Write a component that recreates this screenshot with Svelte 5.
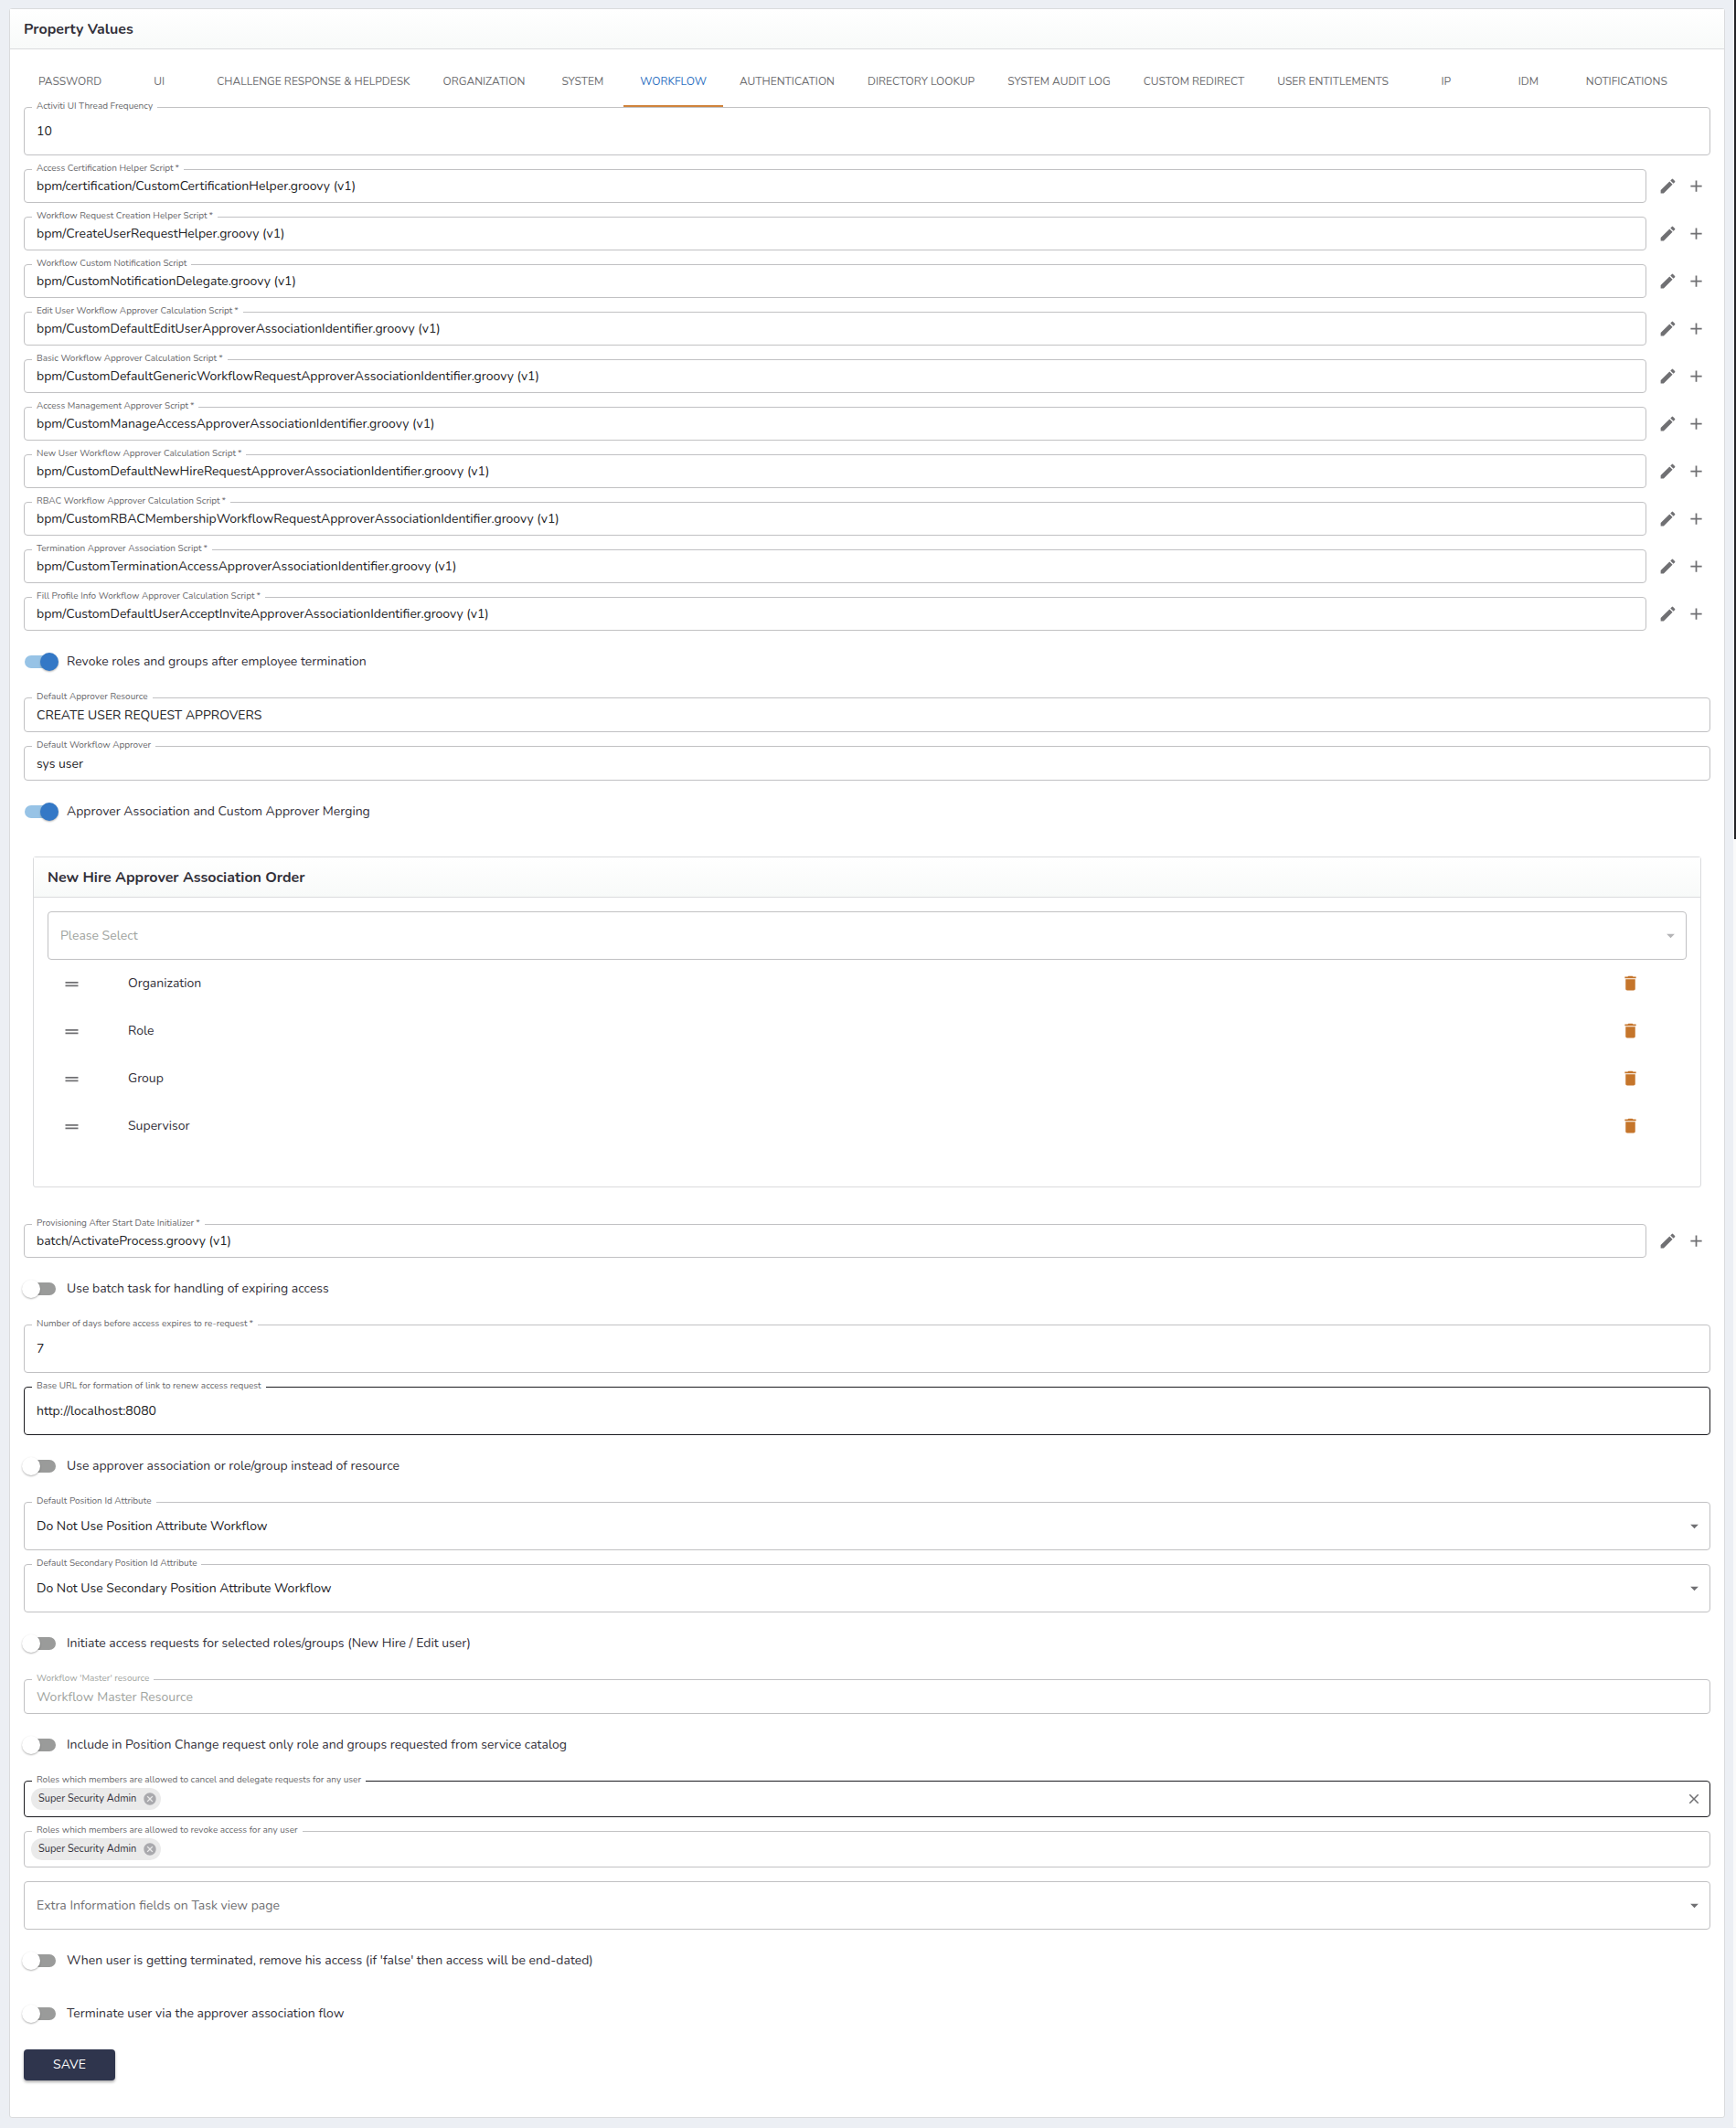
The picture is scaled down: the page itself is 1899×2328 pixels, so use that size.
<script>
  const tabs = [
    'Password', 'UI', 'Challenge Response & Helpdesk', 'Organization', 'System',
    'Workflow', 'Authentication', 'Directory Lookup', 'System Audit Log',
    'Custom Redirect', 'User Entitlements', 'IP', 'IDM', 'Notifications',
  ];
  let activeTab = $state('Workflow');

  const scripts = $state([
    { id: 'cert', label: 'Access Certification Helper Script', required: true, value: 'bpm/certification/CustomCertificationHelper.groovy (v1)' },
    { id: 'create', label: 'Workflow Request Creation Helper Script', required: true, value: 'bpm/CreateUserRequestHelper.groovy (v1)' },
    { id: 'notify', label: 'Workflow Custom Notification Script', value: 'bpm/CustomNotificationDelegate.groovy (v1)' },
    { id: 'edit', label: 'Edit User Workflow Approver Calculation Script', required: true, value: 'bpm/CustomDefaultEditUserApproverAssociationIdentifier.groovy (v1)' },
    { id: 'basic', label: 'Basic Workflow Approver Calculation Script', required: true, value: 'bpm/CustomDefaultGenericWorkflowRequestApproverAssociationIdentifier.groovy (v1)' },
    { id: 'access', label: 'Access Management Approver Script', required: true, value: 'bpm/CustomManageAccessApproverAssociationIdentifier.groovy (v1)' },
    { id: 'newuser', label: 'New User Workflow Approver Calculation Script', required: true, value: 'bpm/CustomDefaultNewHireRequestApproverAssociationIdentifier.groovy (v1)' },
    { id: 'rbac', label: 'RBAC Workflow Approver Calculation Script', required: true, value: 'bpm/CustomRBACMembershipWorkflowRequestApproverAssociationIdentifier.groovy (v1)' },
    { id: 'term', label: 'Termination Approver Association Script', required: true, value: 'bpm/CustomTerminationAccessApproverAssociationIdentifier.groovy (v1)' },
    { id: 'profile', label: 'Fill Profile Info Workflow Approver Calculation Script', required: true, value: 'bpm/CustomDefaultUserAcceptInviteApproverAssociationIdentifier.groovy (v1)' },
  ]);

  const provisioning = $state({
    id: 'provisioning',
    label: 'Provisioning After Start Date Initializer',
    required: true,
    value: 'batch/ActivateProcess.groovy (v1)',
  });

  let order = $state(['Organization', 'Role', 'Group', 'Supervisor']);

  function removeApprover(name) {
    order = order.filter(o => o !== name);
  }
</script>

{#snippet icon(d)}
  <svg class="icon" viewBox="0 0 24 24" aria-hidden="true"><path {d} /></svg>
{/snippet}

{#snippet fieldLabel(id, label, required = false)}
  <label for={id}>{label}{#if required}&thinsp;*{/if}</label>
{/snippet}

{#snippet textField(id, label, value, kind = '', required = false)}
  <div class="field {kind}">
    {@render fieldLabel(id, label, required)}
    <input {id} type="text" {value} />
  </div>
{/snippet}

{#snippet scriptField(s)}
  <div class="script-row">
    <div class="field short">
      {@render fieldLabel(s.id, s.label, s.required)}
      <input id={s.id} type="text" bind:value={s.value} />
    </div>
    <div class="actions">
      <button type="button" class="icon-btn" aria-label="Edit">
        {@render icon('M3 17.25V21h3.75L17.81 9.94l-3.75-3.75L3 17.25zM20.71 7.04c.39-.39.39-1.02 0-1.41l-2.34-2.34a.9959.9959 0 0 0-1.41 0l-1.83 1.83 3.75 3.75 1.83-1.83z')}
      </button>
      <button type="button" class="icon-btn" aria-label="Add">
        {@render icon('M19 13h-6v6h-2v-6H5v-2h6V5h2v6h6v2z')}
      </button>
    </div>
  </div>
{/snippet}

{#snippet toggle(label, checked = false)}
  <label class="toggle">
    <input type="checkbox" role="switch" {checked} />
    <span>{label}</span>
  </label>
{/snippet}

{#snippet dropdown(id, label, value)}
  <div class="field">
    {@render fieldLabel(id, label)}
    <select {id}><option>{value}</option></select>
    {@render icon('M7 10l5 5 5-5z')}
  </div>
{/snippet}

{#snippet chipField(id, label, active = false)}
  <div class="field chips" class:active>
    {@render fieldLabel(id, label)}
    <span class="chip">
      Super Security Admin
      <button type="button" aria-label="Remove Super Security Admin">
        {@render icon('M12 2C6.47 2 2 6.47 2 12s4.47 10 10 10 10-4.47 10-10S17.53 2 12 2zm5 13.59L15.59 17 12 13.41 8.41 17 7 15.59 10.59 12 7 8.41 8.41 7 12 10.59 15.59 7 17 8.41 13.41 12 17 15.59z')}
      </button>
    </span>
    <input {id} type="text" />
    {#if active}
      <button type="button" class="clear" aria-label="Clear">
        {@render icon('M19 6.41L17.59 5 12 10.59 6.41 5 5 6.41 10.59 12 5 17.59 6.41 19 12 13.41 17.59 19 19 17.59 13.41 12z')}
      </button>
    {/if}
  </div>
{/snippet}

<div class="page">
  <main class="card">
    <h1 class="card-title">Property Values</h1>
    <nav class="tabs" role="tablist">
      {#each tabs as tab}
        <button
          type="button" role="tab"
          aria-selected={tab === activeTab}
          class:selected={tab === activeTab}
          onclick={() => (activeTab = tab)}
        >{tab}</button>
      {/each}
    </nav>

    <form class="form" onsubmit={e => e.preventDefault()}>
      {@render textField('frequency', 'Activiti UI Thread Frequency', '10')}
      {#each scripts as s (s.id)}
        {@render scriptField(s)}
      {/each}

      {@render toggle('Revoke roles and groups after employee termination', true)}
      {@render textField('resource', 'Default Approver Resource', 'CREATE USER REQUEST APPROVERS', 'medium')}
      {@render textField('approver', 'Default Workflow Approver', 'sys user', 'medium')}
      {@render toggle('Approver Association and Custom Approver Merging', true)}

      <section class="card nested">
        <h2 class="card-title">New Hire Approver Association Order</h2>
        <div class="nested-body">
          <div class="field disabled">
            <select aria-label="Please Select" disabled><option>Please Select</option></select>
            {@render icon('M7 10l5 5 5-5z')}
          </div>
          <ul class="order">
            {#each order as name (name)}
              <li>
                <span class="handle">{@render icon('M20 9H4v2h16V9zM4 15h16v-2H4v2z')}</span>
                <span class="name">{name}</span>
                <button type="button" class="icon-btn trash" aria-label="Delete {name}" onclick={() => removeApprover(name)}>
                  {@render icon('M6 19c0 1.1.9 2 2 2h8c1.1 0 2-.9 2-2V7H6v12zM19 4h-3.5l-1-1h-5l-1 1H5v2h14V4z')}
                </button>
              </li>
            {/each}
          </ul>
        </div>
      </section>

      {@render scriptField(provisioning)}
      {@render toggle('Use batch task for handling of expiring access')}
      {@render textField('days', 'Number of days before access expires to re-request', '7', '', true)}
      {@render textField('base-url', 'Base URL for formation of link to renew access request', 'http://localhost:8080', 'active')}
      {@render toggle('Use approver association or role/group instead of resource')}
      {@render dropdown('position', 'Default Position Id Attribute', 'Do Not Use Position Attribute Workflow')}
      {@render dropdown('position2', 'Default Secondary Position Id Attribute', 'Do Not Use Secondary Position Attribute Workflow')}
      {@render toggle('Initiate access requests for selected roles/groups (New Hire / Edit user)')}
      <div class="field medium disabled">
        {@render fieldLabel('master', "Workflow 'Master' resource")}
        <input id="master" type="text" placeholder="Workflow Master Resource" disabled />
      </div>
      {@render toggle('Include in Position Change request only role and groups requested from service catalog')}
      {@render chipField('cancel-roles', 'Roles which members are allowed to cancel and delegate requests for any user', true)}
      {@render chipField('revoke-roles', 'Roles which members are allowed to revoke access for any user')}
      <div class="field empty">
        <select aria-label="Extra Information fields on Task view page">
          <option>Extra Information fields on Task view page</option>
        </select>
        {@render icon('M7 10l5 5 5-5z')}
      </div>
      {@render toggle("When user is getting terminated, remove his access (if 'false' then access will be end-dated)")}
      {@render toggle('Terminate user via the approver association flow')}
      <button type="submit" class="save">Save</button>
    </form>
  </main>
  <div class="track"><div class="thumb"></div></div>
</div>

<style>
  :global(body) {
    margin: 0;
    background: #eceff4;
  }
  .page {
    display: flex;
    font-family: Nunito, Lato, "Open Sans", sans-serif;
    font-size: 14px;
    line-height: 20px;
    color: #33313a;
  }
  .page :is(button, input, select) {
    font: inherit;
    color: inherit;
    margin: 0;
    box-sizing: border-box;
  }

  .card {
    flex: 1;
    min-width: 0;
    background: #fff;
    border: 1px solid #dadbdd;
    border-radius: 3px;
  }
  .page > .card { margin: 9px 9px 10px 10px; }
  .card-title {
    margin: 0;
    padding: 12px 15px 10px;
    font-size: 16px;
    line-height: 21px;
    font-weight: 700;
    border-bottom: 1px solid #dadbdd;
    background: linear-gradient(#fff, #f8faf9);
  }

  /* tabs */
  .tabs {
    display: flex;
    padding: 5px 13px 0;
  }
  .page .tabs button {
    min-width: 90px;
    height: 58px;
    padding: 3px 18px 0;
    border: 0;
    border-bottom: 2px solid transparent;
    background: none;
    font-size: 12px;
    text-transform: uppercase;
    white-space: nowrap;
    color: #6d6d70;
  }
  .page .tabs .selected {
    color: #2f72c2;
    border-bottom-color: #d0843c;
  }

  .form {
    display: flex;
    flex-direction: column;
    gap: 15px;
    padding: 0 15px 40px;
  }

  /* outlined fields, the label sits in a notch of the top border */
  .field {
    position: relative;
    display: flex;
    align-items: center;
    box-sizing: border-box;
    height: 53px;
    border: 1px solid #c1c1c3;
    border-radius: 4px;
    color: #232326;
  }
  .field.short { height: 37px; }
  .field.medium { height: 38px; }
  .field.active { border-color: #1c1c20; }
  .field label {
    position: absolute;
    top: -9px;
    left: 8px;
    padding: 0 5px;
    background: #fff;
    font-size: 10px;
    line-height: 14px;
    white-space: nowrap;
    color: #68686b;
  }
  .field input,
  .field select {
    flex: 1;
    min-width: 0;
    height: 100%;
    padding: 0 13px;
    border: 0;
    outline: 0;
    background: none;
    appearance: none;
  }
  .field > .icon {
    position: absolute;
    right: 6px;
    pointer-events: none;
  }
  .field.empty { color: #707073; }
  .field.disabled,
  .field.disabled label { color: #a0a4a0; }
  .field.disabled select { opacity: 1; }
  .field.disabled > .icon { fill: #b4b4b6; }
  .field input::placeholder { color: #a0a4a0; opacity: 1; }

  .icon {
    display: block;
    width: 21px;
    height: 21px;
    fill: #707073;
  }
  .page .icon-btn {
    padding: 5px;
    border: 0;
    background: none;
  }

  .script-row {
    display: flex;
    align-items: center;
    gap: 8px;
  }
  .script-row .field { flex: 1; }
  .actions { display: flex; }

  /* switches */
  .toggle {
    display: flex;
    align-items: center;
    gap: 12px;
    height: 38px;
    margin-bottom: 5px;
    padding-left: 1px;
  }
  .toggle input {
    position: relative;
    width: 34px;
    height: 14px;
    border-radius: 7px;
    background: #9a9b9a;
    appearance: none;
  }
  .toggle input::before {
    content: "";
    position: absolute;
    top: -3px;
    left: -3px;
    width: 20px;
    height: 20px;
    border-radius: 50%;
    background: #fff;
    box-shadow: 0 1px 2px rgba(0, 0, 0, 0.3);
  }
  .toggle input:checked { background: #97c3e6; }
  .toggle input:checked::before {
    left: 17px;
    background: #3478c6;
  }

  /* approver order */
  .nested {
    flex: none;
    margin: 10px 10px 25px;
  }
  .nested-body { padding: 15px 15px 40px; }
  .order {
    margin: 0;
    padding: 0;
    list-style: none;
  }
  .order li {
    display: flex;
    align-items: center;
    height: 52px;
    padding: 0 46px 0 16px;
  }
  .handle { width: 72px; }
  .name { flex: 1; }
  .page .trash { padding-bottom: 6px; }
  .trash .icon { fill: #c5752b; }

  /* chips */
  .field.chips {
    height: 40px;
    padding: 0 8px 0 7px;
  }
  .chip {
    display: flex;
    align-items: center;
    gap: 7px;
    height: 24px;
    padding: 0 4px 0 8px;
    border-radius: 12px;
    background: #eaeaea;
    font-size: 11px;
    color: #33313a;
  }
  .chips .chip button,
  .chips .clear {
    padding: 0;
    border: 0;
    background: none;
  }
  .chip .icon {
    width: 16px;
    height: 16px;
    fill: #a9a9ad;
  }
  .clear .icon {
    width: 18px;
    height: 18px;
  }

  .page .save {
    align-self: flex-start;
    width: 100px;
    height: 34px;
    border: 0;
    border-radius: 4px;
    background: #2f354d;
    color: #fff;
    text-transform: uppercase;
    box-shadow: 0 2px 3px rgba(0, 0, 0, 0.3);
  }

  .track {
    width: 3px;
    background: #fafafa;
  }
  .thumb {
    width: 2px;
    height: 918px;
    margin-left: auto;
    background: #232326;
  }
</style>
